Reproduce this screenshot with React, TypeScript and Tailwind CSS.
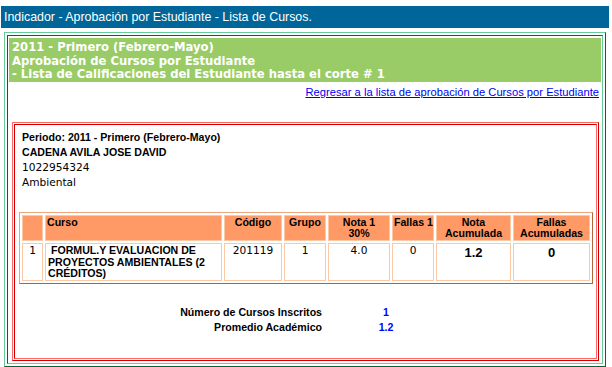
import React from "react";

// ─── Data ─────────────────────────────────────────────────────────────────────

const COURSES = [
  {
    n: 1,
    curso: "FORMUL.Y EVALUACION DE PROYECTOS AMBIENTALES (2 CRÉDITOS)",
    codigo: "201119",
    grupo: "1",
    nota1: "4.0",
    fallas1: "0",
    notaAcum: "1.2",
    fallasAcum: "0",
  },
];

const th =
  "bg-[#ff9966] border border-solid border-[color:#fbc9a6] align-top text-center font-bold px-[1px] pt-[1px] leading-[11.5px] whitespace-nowrap";
const td =
  "bg-white border border-solid border-[color:#fbc9a6] align-top text-center px-[2px] pt-[1px] leading-[11.8px]";
const plain = "font-['DejaVu_Sans',Verdana,sans-serif] text-[10.6px]";

// ─── App ──────────────────────────────────────────────────────────────────────

export default function App() {
  return (
    <div className="w-[612px] h-[367px] bg-white overflow-hidden font-['Liberation_Sans',Arial,sans-serif] text-[10.6px] text-black">
      {/* Title bar */}
      <div className="mt-[6px] ml-[1px] w-[608px] h-[22px] bg-[#006699] text-white text-[12.4px] leading-[22px] pl-[3px]">
        Indicador - Aprobación por Estudiante - Lista de Cursos.
      </div>

      {/* Green frame */}
      <div className="mt-[4px] ml-[4px] w-[602px] h-[335px] border border-solid border-t-[color:#66cc99] border-l-[color:#66cc99] border-r-[color:#006633] border-b-[color:#006633] p-[2px]">
        <div className="h-full border border-solid border-t-[color:#006633] border-l-[color:#006633] border-r-[color:#66cc99] border-b-[color:#66cc99] px-[1px] pt-[2px]">
          <div className="h-[44px] bg-[#99cc66] text-white font-bold font-['DejaVu_Sans',Verdana,sans-serif] text-[11.6px] leading-[13.5px] px-[3px] pt-[3px]">
            <div>2011 - Primero (Febrero-Mayo)</div>
            <div>Aprobación de Cursos por Estudiante</div>
            <div>- Lista de Calificaciones del Estudiante hasta el corte # 1</div>
          </div>
          <div className="text-right pr-[2px] pt-[2px] text-[11.2px]">
            <a href="#" className="text-[#0000ee] underline">
              Regresar a la lista de aprobación de Cursos por Estudiante
            </a>
          </div>

          {/* Red frame */}
          <div className="mt-[21px] ml-[3px] w-[587px] h-[239px] border border-solid border-t-[color:#ff6666] border-l-[color:#ff6666] border-r-[color:#cc0000] border-b-[color:#cc0000] p-[1px]">
            <div className="h-full border border-solid border-t-[color:#cc0000] border-l-[color:#cc0000] border-r-[color:#ff6666] border-b-[color:#ff6666] px-[4px] pt-[5px]">
              <div className="pl-[3px] leading-[15px]">
                <div className="font-bold">Periodo: 2011 - Primero (Febrero-Mayo)</div>
                <div className="font-bold">CADENA AVILA JOSE DAVID</div>
                <div className={plain}>1022954324</div>
                <div className={plain}>Ambiental</div>
              </div>

              <table className="mt-[22px] w-[574px] table-fixed border-separate border-spacing-[2px] border border-solid border-t-[color:#eba47c] border-l-[color:#eba47c] border-r-[color:#b5643a] border-b-[color:#b5643a]">
                <thead>
                  <tr className="h-[25px]">
                    <th className={`${th} w-[21px]`}></th>
                    <th className={`${th} text-left w-[177px]`}>Curso</th>
                    <th className={`${th} w-[58px]`}>Código</th>
                    <th className={`${th} w-[42px]`}>Grupo</th>
                    <th className={`${th} w-[62px]`}>
                      Nota 1<br />30%
                    </th>
                    <th className={`${th} w-[42px]`}>Fallas 1</th>
                    <th className={`${th} w-[75px]`}>
                      Nota
                      <br />
                      Acumulada
                    </th>
                    <th className={th}>
                      Fallas
                      <br />
                      Acumuladas
                    </th>
                  </tr>
                </thead>
                <tbody>
                  {COURSES.map((c) => (
                    <tr key={c.n} className="h-[38px]">
                      <td className={`${td} ${plain}`}>{c.n}</td>
                      <td className={`${td} text-left font-bold`}>&nbsp;{c.curso}</td>
                      <td className={`${td} ${plain}`}>{c.codigo}</td>
                      <td className={`${td} ${plain}`}>{c.grupo}</td>
                      <td className={`${td} ${plain}`}>{c.nota1}</td>
                      <td className={`${td} ${plain}`}>{c.fallas1}</td>
                      <td className={`${td} font-bold text-[13px] leading-[15px]`}>{c.notaAcum}</td>
                      <td className={`${td} font-bold text-[13px] leading-[15px]`}>{c.fallasAcum}</td>
                    </tr>
                  ))}
                </tbody>
              </table>

              {/* Summary */}
              <div className="mt-[21px] grid grid-cols-[303px_128px] leading-[15px] font-bold">
                <div className="text-right">Número de Cursos Inscritos</div>
                <div className="text-center text-[#0000ff]">1</div>
                <div className="text-right">Promedio Académico</div>
                <div className="text-center text-[#0000ff]">1.2</div>
              </div>
            </div>
          </div>
        </div>
      </div>
    </div>
  );
}
